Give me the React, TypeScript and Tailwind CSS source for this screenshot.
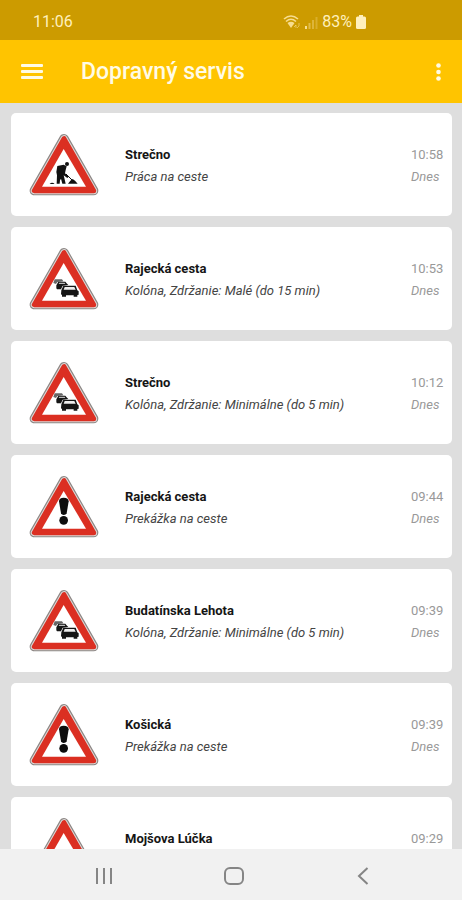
import React from "react";

type SignKind = "works" | "queue" | "danger";

interface Report {
  place: string;
  detail: string;
  time: string;
  kind: SignKind;
}

const reports: Report[] = [
  { place: "Strečno", detail: "Práca na ceste", time: "10:58", kind: "works" },
  { place: "Rajecká cesta", detail: "Kolóna, Zdržanie: Malé (do 15 min)", time: "10:53", kind: "queue" },
  { place: "Strečno", detail: "Kolóna, Zdržanie: Minimálne (do 5 min)", time: "10:12", kind: "queue" },
  { place: "Rajecká cesta", detail: "Prekážka na ceste", time: "09:44", kind: "danger" },
  { place: "Budatínska Lehota", detail: "Kolóna, Zdržanie: Minimálne (do 5 min)", time: "09:39", kind: "queue" },
  { place: "Košická", detail: "Prekážka na ceste", time: "09:39", kind: "danger" },
  { place: "Mojšova Lúčka", detail: "Kolóna, Zdržanie: Minimálne (do 5 min)", time: "09:29", kind: "queue" },
];

function Works() {
  return (
    <g fill="#111">
      <circle cx="143" cy="116" r="6" />
      <path d="M114 122 L133 118 L142 123 L139 134 L137 144 L148 154 L144 158 L133 150 L135 158 L139 175 L129 175 L125 160 L122 165 L121 175 L112 175 L113 150 L111 140Z" />
      <path d="M140 146 L158 164" stroke="#111" strokeWidth="3" />
      <path d="M146 175 L153 166 L160 161 L167 166 L175 175Z" />
      <path d="M91 176 Q98 168 106 176Z" />
    </g>
  );
}

function Queue() {
  return (
    <g fill="#151515">
      <path d="M102 131 L106 120 L128 120 L132 126 L114 128 L110 134Z" fill="#666" />
      <path d="M111 138 L117 127 L138 127 L143 133 L147 137 L130 139 L125 150 L113 150 L111 147Z" />
      <path d="M120 130 L136 130 L138 134 L118 134Z" fill="#bbb" />
      <path d="M126 153 L132 139 L169 139 L174 153 L178 156 L178 166 L174 167 L174 172 L163 172 L163 168 L140 168 L140 172 L128 172 L128 167 L125 165Z" />
      <path d="M136 143 L165 143 L169 151 L133 151Z" fill="#eee" />
    </g>
  );
}

function Danger() {
  return (
    <g fill="#0d0d0d">
      <path d="M119 102 Q119 91 133 91 Q148 91 148 102 L142 138 Q140 143 133 143 Q127 143 125 138Z" />
      <circle cx="133" cy="159" r="13" />
    </g>
  );
}

function Sign({ kind }: { kind: SignKind }) {
  const edge = "M134 40 L45 196 L223 196Z";
  return (
    <svg className="h-[63px] w-[70px] shrink-0" viewBox="29 23 210 189" aria-hidden="true">
      <g strokeLinejoin="round">
        <path d={edge} fill="#8d8785" stroke="#8d8785" strokeWidth="28" />
        <path d={edge} fill="#dedad8" stroke="#dedad8" strokeWidth="21" />
        <path d={edge} fill="#db2f22" stroke="#db2f22" strokeWidth="15" />
      </g>
      <path d="M133 71 L68 184 L200 184Z" fill="#fff" />
      {kind === "works" && <Works />}
      {kind === "queue" && <Queue />}
      {kind === "danger" && <Danger />}
    </svg>
  );
}

function StatusBar() {
  return (
    <div className="flex h-10 shrink-0 items-center justify-between bg-[#cc9b00] pt-1 pr-[96px] pl-[33px] text-base text-[#fff0bd]">
      <span>11:06</span>
      <div className="flex items-center">
        <svg className="h-[15px] w-[18px]" viewBox="0 0 18 15" fill="none" stroke="#f7dd90" aria-hidden="true">
          <path d="M1 4 Q8 -2 15 4" strokeWidth="1.6" />
          <path d="M3 6.5 Q8 2 13 6.5" strokeWidth="1.6" />
          <path d="M4.500 8 Q8 5.500 11.500 8 L8 13Z" fill="#f7dd90" stroke="none" />
          <path d="M11 12 L13 10 L13 13 M16 8 L16 11 L14 13" strokeWidth="1" opacity=".6" />
        </svg>
        <svg className="ml-1 h-[15px] w-[13px]" viewBox="0 0 13 15" fill="#f7dd90" aria-hidden="true">
          <rect x="0" y="11" width="2" height="3" />
          <rect x="3.500" y="8" width="2" height="6" opacity=".5" />
          <rect x="7" y="5" width="2" height="9" opacity=".4" />
          <rect x="10.500" y="2" width="2" height="12" opacity=".3" />
        </svg>
        <span className="ml-1">83%</span>
        <svg className="ml-1 h-[14px] w-[10px]" viewBox="0 0 10 14" fill="#fff0bd" aria-hidden="true">
          <rect x="3" y="0" width="4" height="3" />
          <rect x="0" y="1.500" width="10" height="12.500" rx="1.500" />
        </svg>
      </div>
    </div>
  );
}

function AppBar() {
  return (
    <header className="flex h-[63px] shrink-0 items-center bg-[#ffc400] pr-3 pl-5 text-[#fffbe6]">
      <button type="button" aria-label="Menu" className="flex h-10 w-6 items-center justify-center">
        <svg className="h-4 w-[22px]" viewBox="0 0 22 16" fill="currentColor" aria-hidden="true">
          <rect y="0" width="22" height="3" rx="1" />
          <rect y="6" width="22" height="3" rx="1" />
          <rect y="12" width="22" height="3" rx="1" />
        </svg>
      </button>
      <h1 className="ml-[37px] grow pt-px text-[23px] font-medium">Dopravný servis</h1>
      <button type="button" aria-label="Ďalšie možnosti" className="flex h-10 w-6 items-center justify-center">
        <svg className="h-[18px] w-[5px]" viewBox="0 0 5 18" fill="currentColor" aria-hidden="true">
          <circle cx="2.500" cy="2.500" r="2.300" />
          <circle cx="2.500" cy="9" r="2.300" />
          <circle cx="2.500" cy="15.500" r="2.300" />
        </svg>
      </button>
    </header>
  );
}

function ReportCard({ report }: { report: Report }) {
  return (
    <li className="flex h-[103px] shrink-0 items-center rounded-[5px] bg-white pr-[7px] pl-[18px]">
      <Sign kind={report.kind} />
      <div className="ml-[26px] grow pt-0.5 text-[13px] leading-[22px] text-[#444]">
        <h2 className="font-bold text-[#151515]">{report.place}</h2>
        <p className="italic">{report.detail}</p>
      </div>
      <div className="w-[34px] shrink-0 pt-0.5 text-[13px] leading-[22px] text-[#999]">
        <p>{report.time}</p>
        <p className="italic">Dnes</p>
      </div>
    </li>
  );
}

function NavBar() {
  const button = "flex h-full flex-1 items-center justify-center";
  return (
    <nav className="flex h-[51px] shrink-0 items-center bg-[#f1f1f1] pt-0.5 pr-[34px] pl-[39px] text-[#858585]">
      <button type="button" aria-label="Posledné aplikácie" className={button}>
        <svg className="h-[18px] w-[18px]" viewBox="0 0 18 18" stroke="currentColor" strokeWidth="2" aria-hidden="true">
          <path d="M2 1 V17 M9 1 V17 M16 1 V17" />
        </svg>
      </button>
      <button type="button" aria-label="Domov" className={button}>
        <svg className="h-[18px] w-5" viewBox="0 0 20 18" fill="none" stroke="currentColor" strokeWidth="2" aria-hidden="true">
          <rect x="1" y="1" width="18" height="16" rx="5" />
        </svg>
      </button>
      <button type="button" aria-label="Späť" className={button}>
        <svg className="h-[18px] w-3" viewBox="0 0 12 18" fill="none" stroke="currentColor" strokeWidth="2" aria-hidden="true">
          <path d="M10.500 1 L2 9 L10.500 17" />
        </svg>
      </button>
    </nav>
  );
}

export default function App() {
  return (
    <div className="flex h-screen flex-col overflow-hidden bg-[#dedede] font-[Roboto,sans-serif]">
      <StatusBar />
      <AppBar />
      <main className="min-h-0 grow overflow-y-auto pt-[10px] pr-[10px] pl-[11px] [scrollbar-width:none]">
        <ul className="flex flex-col gap-[11px]">
          {reports.map((report) => (
            <ReportCard key={report.place + report.time} report={report} />
          ))}
        </ul>
      </main>
      <NavBar />
    </div>
  );
}
